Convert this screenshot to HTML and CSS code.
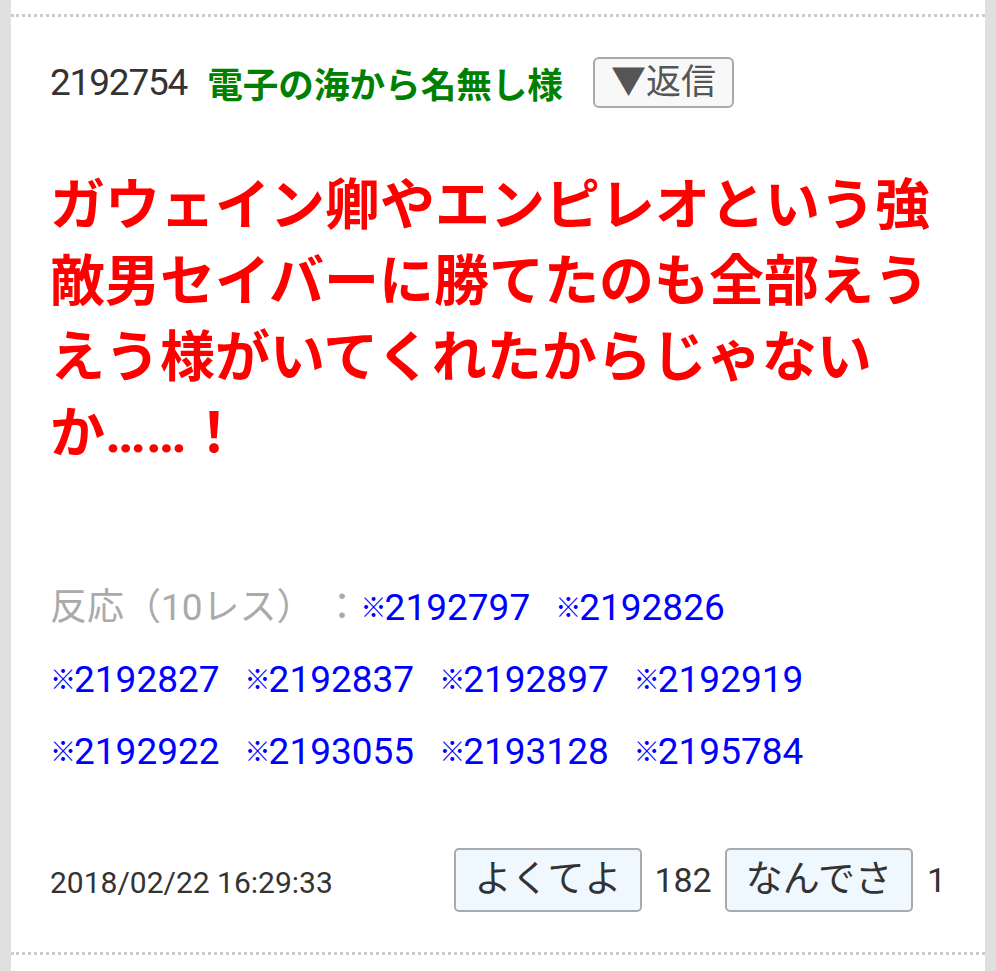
FILE: index.html
```html
<!DOCTYPE html>
<html lang="ja">
    <head>
        <meta charset="utf-8" />
        <link rel="stylesheet" href="styles.css">
    </head>

    <body>
        <div class="page">
            <article class="res">
                <div class="res-head">
                    <span class="res-num">2192754</span>
                    <span class="res-name">電子の海から名無し様</span>
                    <button class="reply-btn">▼返信</button>
                </div>

                <div class="res-body">
                    ガウェイン卿やエンピレオという強敵男セイバーに勝てたのも全部えうえう様がいてくれたからじゃないか……！
                </div>

                <!-- links without spaces between them, gaps come from margin -->
                <div class="res-links"><span class="label">反応（10レス）<span class="colon">：</span></span><a href="#"><span class="mark">※</span>2192797</a><a href="#"><span class="mark">※</span>2192826</a><a href="#"><span class="mark">※</span>2192827</a><a href="#"><span class="mark">※</span>2192837</a><a href="#"><span class="mark">※</span>2192897</a><a href="#"><span class="mark">※</span>2192919</a><a href="#"><span class="mark">※</span>2192922</a><a href="#"><span class="mark">※</span>2193055</a><a href="#"><span class="mark">※</span>2193128</a><a href="#"><span class="mark">※</span>2195784</a></div>

                <div class="res-foot">
                    <span class="date">2018/02/22 16:29:33</span>
                    <div class="votes">
                        <button class="vote">よくてよ</button>
                        <span class="count">182</span>
                        <button class="vote">なんでさ</button>
                        <span class="count last">1</span>
                    </div>
                </div>
            </article>
        </div>
    </body>
</html>
```

FILE: styles.css
```css
body {
    margin: 0;
    background: #e0e0e0;
    font-family: Roboto, "Noto Sans CJK JP", sans-serif;
    color: #333;
}

.page {
    margin: 0 11px;
    padding: 14px 0 40px;
    background: #fff;
}

.res {
    border-top: 3px dotted #ccc;
    border-bottom: 3px dotted #ccc;
    padding: 40px 39px 40px;
}

.res-head {
    display: flex;
    align-items: center;
    height: 51px;
    font-size: 35.6px;
}

.res-num {
    font-size: 37px;
    letter-spacing: -1.2px;
    margin-right: 20px;
    color: #333;
}

.res-name {
    color: #008000;
    font-weight: bold;
    margin-right: 30px;
}

.reply-btn {
    font-family: inherit;
    font-size: 35px;
    line-height: 45px;
    height: 51px;
    padding: 0 16px;
    color: #555;
    background: #f8f8f8;
    border: 2px solid #aaa;
    border-radius: 6px;
}

.res-body {
    margin-top: 59px;
    font-size: 55px;
    line-height: 76px;
    font-weight: bold;
    color: #f00;
}

.res-links {
    margin-top: 101px;
    padding-right: 8px;
    font-size: 37px;
    line-height: 72px;
}

.res-links .label {
    color: #aaa;
    line-height: 1;
}

.res-links .colon {
    display: inline-block;
    width: 37px;
    margin-left: 10px;
    text-align: center;
}

.res-links a {
    display: inline-block;
    margin-right: 25px;
    color: #00f;
    text-decoration: none;
    white-space: nowrap;
}

.res-links .mark {
    font-size: 26px;
    line-height: 1;
    letter-spacing: -2px;
    position: relative;
    top: -3px;
}

.res-foot {
    margin-top: 60px;
    display: flex;
    justify-content: space-between;
    align-items: center;
}

.date {
    font-size: 30px;
    padding-top: 4px;
}

.votes {
    display: flex;
    align-items: center;
}

.vote {
    font-family: inherit;
    font-size: 37px;
    line-height: 50px;
    height: 64px;
    padding: 0 19px;
    color: #333;
    background: #f0f8ff;
    border: 2px solid #aaa;
    border-radius: 5px;
}

.count {
    font-size: 34px;
    margin: 0 13px 0 12px;
}

.count.last {
    margin: 0 0 0 14px;
}
```
